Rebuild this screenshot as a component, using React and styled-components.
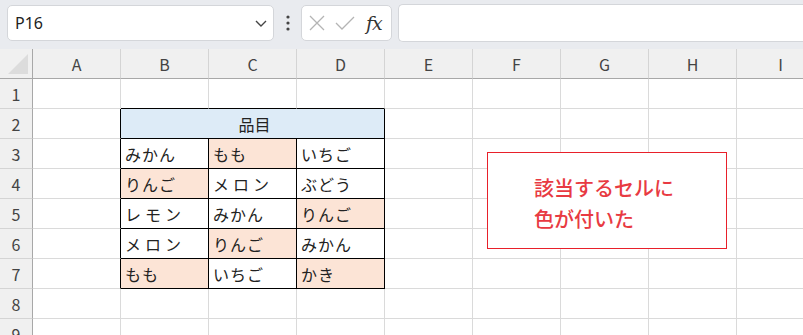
import React from "react";
import styled, { createGlobalStyle } from "styled-components";

const Global = createGlobalStyle`
  html, body { margin: 0; padding: 0; background: #ffffff; overflow: hidden; }
  body { font-family: "Noto Sans CJK JP", "Noto Sans", sans-serif; }
`;

const Page = styled.div`
  position: relative;
  width: 803px;
  height: 335px;
  overflow: hidden;
`;

const Toolbar = styled.div`
  display: flex;
  align-items: center;
  height: 49px;
  padding: 0 0 4px 7px;
  box-sizing: border-box;
  background: #e9ebef;
`;

const NameBox = styled.div`
  display: flex;
  align-items: center;
  justify-content: space-between;
  width: 267px;
  height: 36px;
  box-sizing: border-box;
  padding: 0 5px 0 7px;
  background: #fff;
  border: 1px solid #d4d6da;
  border-radius: 5px;
  font-family: "Noto Sans", sans-serif;
  font-size: 16px;
  color: #222;
`;

const Kebab = styled.div`
  width: 27px;
  display: flex;
  justify-content: center;
`;

const FxBox = styled.div`
  display: flex;
  align-items: center;
  width: 91px;
  height: 36px;
  box-sizing: border-box;
  padding: 0 0 0 6px;
  background: #fff;
  border: 1px solid #d4d6da;
  border-radius: 5px;
`;

const FxLabel = styled.span`
  font-family: "DejaVu Serif", "Liberation Serif", serif;
  font-style: italic;
  font-weight: normal;
  font-size: 19px;
  color: #333;
  margin-left: 10px;
  letter-spacing: -1px;
`;

const FormulaBar = styled.div`
  flex: 1;
  height: 36px;
  margin-left: 6px;
  background: #fff;
  border: 1px solid #d4d6da;
  border-right: none;
  border-radius: 5px 0 0 5px;
`;

const Grid = styled.div`
  display: grid;
  grid-template-columns: 33px repeat(9, 88px);
  grid-auto-rows: 30px;
`;

const Cell = styled.div`
  box-sizing: border-box;
  border-right: 1px solid ${(p) => (p.$br ? "#000" : "#dadada")};
  border-bottom: 1px solid ${(p) => (p.$bb ? "#000" : "#dadada")};
  background: ${(p) => p.$bg || "#fff"};
  display: flex;
  align-items: center;
  justify-content: ${(p) => (p.$center ? "center" : "flex-start")};
  padding: 1px 0 0 4px;
  font-size: 16px;
  color: #222;
  white-space: nowrap;
  grid-column: ${(p) => (p.$span ? `span ${p.$span}` : "auto")};
`;

const ColHead = styled.div`
  box-sizing: border-box;
  background: #f0f0f0;
  border-right: 1px solid #d4d4d4;
  border-bottom: 1px solid #a8a8a8;
  display: flex;
  align-items: center;
  justify-content: center;
  font-size: 16px;
  color: #444;
  padding-top: 1px;
`;

const Corner = styled.div`
  box-sizing: border-box;
  background: #f0f0f0;
  border-right: 1px solid #a8a8a8;
  border-bottom: 1px solid #a8a8a8;
  display: flex;
  align-items: flex-end;
  justify-content: flex-end;
  padding: 0 4px 4px 0;
`;

const RowHead = styled.div`
  box-sizing: border-box;
  background: #f0f0f0;
  border-right: 1px solid #a8a8a8;
  border-bottom: 1px solid #d4d4d4;
  display: flex;
  align-items: center;
  justify-content: center;
  font-size: 16px;
  color: #444;
  padding-top: 1px;
`;

const Note = styled.div`
  position: absolute;
  left: 487px;
  top: 152px;
  width: 240px;
  height: 97px;
  box-sizing: border-box;
  border: 1px solid #e8202a;
  background: #fff;
  padding: 19px 0 0 46px;
  color: #e83a42;
  font-size: 20px;
  font-weight: 500;
  line-height: 31px;
`;

const Spaced = styled.span`
  letter-spacing: ${(p) => p.$ls || "0"};
`;

const PEACH = "#fce4d6";
const BLUE = "#ddebf7";

const cols = ["A", "B", "C", "D", "E", "F", "G", "H", "I"];

const data = [
  [["みかん"], ["もも", PEACH], ["いちご"]],
  [["りんご", PEACH], ["メロン"], ["ぶどう"]],
  [["レモン"], ["みかん"], ["りんご", PEACH]],
  [["メロン"], ["りんご", PEACH], ["みかん"]],
  [["もも", PEACH], ["いちご"], ["かき", PEACH]],
];

function Row({ n, children }) {
  return (
    <>
      <RowHead>{n}</RowHead>
      {children}
    </>
  );
}

function Blank({ count }) {
  return Array.from({ length: count }, (_, i) => <Cell key={i} />);
}

export default function App() {
  const rows = [];
  rows.push(
    <Row key={1} n={1}>
      <Cell />
      <Cell $bb />
      <Cell $bb />
      <Cell $bb />
      <Blank count={5} />
    </Row>
  );
  rows.push(
    <Row key={2} n={2}>
      <Cell $br />
      <Cell $span={3} $br $bb $bg={BLUE} $center>
        品目
      </Cell>
      <Blank count={5} />
    </Row>
  );
  data.forEach((r, i) => {
    rows.push(
      <Row key={i + 3} n={i + 3}>
        <Cell $br />
        {r.map(([t, bg], j) => (
          <Cell key={j} $br $bb $bg={bg}>
            <Spaced $ls={t === "メロン" || t === "レモン" ? "4px" : "1px"}>{t}</Spaced>
          </Cell>
        ))}
        <Blank count={5} />
      </Row>
    );
  });
  for (let n = 8; n <= 9; n++) {
    rows.push(
      <Row key={n} n={n}>
        <Blank count={9} />
      </Row>
    );
  }

  return (
    <Page>
      <Global />
      <Toolbar>
        <NameBox>
          <span>P16</span>
          <svg width="14" height="14" viewBox="0 0 14 14">
            <path d="M2 5 L7 10 L12 5" fill="none" stroke="#444" strokeWidth="1.4" />
          </svg>
        </NameBox>
        <Kebab>
          <svg width="4" height="16" viewBox="0 0 4 16">
            <circle cx="2" cy="2" r="1.6" fill="#444" />
            <circle cx="2" cy="8" r="1.6" fill="#444" />
            <circle cx="2" cy="14" r="1.6" fill="#444" />
          </svg>
        </Kebab>
        <FxBox>
          <svg width="18" height="18" viewBox="0 0 18 18">
            <path d="M2 2 L16 16 M16 2 L2 16" stroke="#b4b4b4" strokeWidth="1.3" fill="none" />
          </svg>
          <svg width="22" height="18" viewBox="0 0 22 18" style={{ marginLeft: 8 }}>
            <path d="M2 9 L8 15 L20 3" stroke="#b4b4b4" strokeWidth="1.3" fill="none" />
          </svg>
          <FxLabel>fx</FxLabel>
        </FxBox>
        <FormulaBar />
      </Toolbar>
      <Grid>
        <Corner>
          <svg width="20" height="20" viewBox="0 0 20 20">
            <path d="M20 0 L20 20 L0 20 Z" fill="#dcdcdc" />
          </svg>
        </Corner>
        {cols.map((c) => (
          <ColHead key={c}>{c}</ColHead>
        ))}
        {rows}
      </Grid>
      <Note>
        該当するセルに
        <br />
        色が付いた
      </Note>
    </Page>
  );
}
